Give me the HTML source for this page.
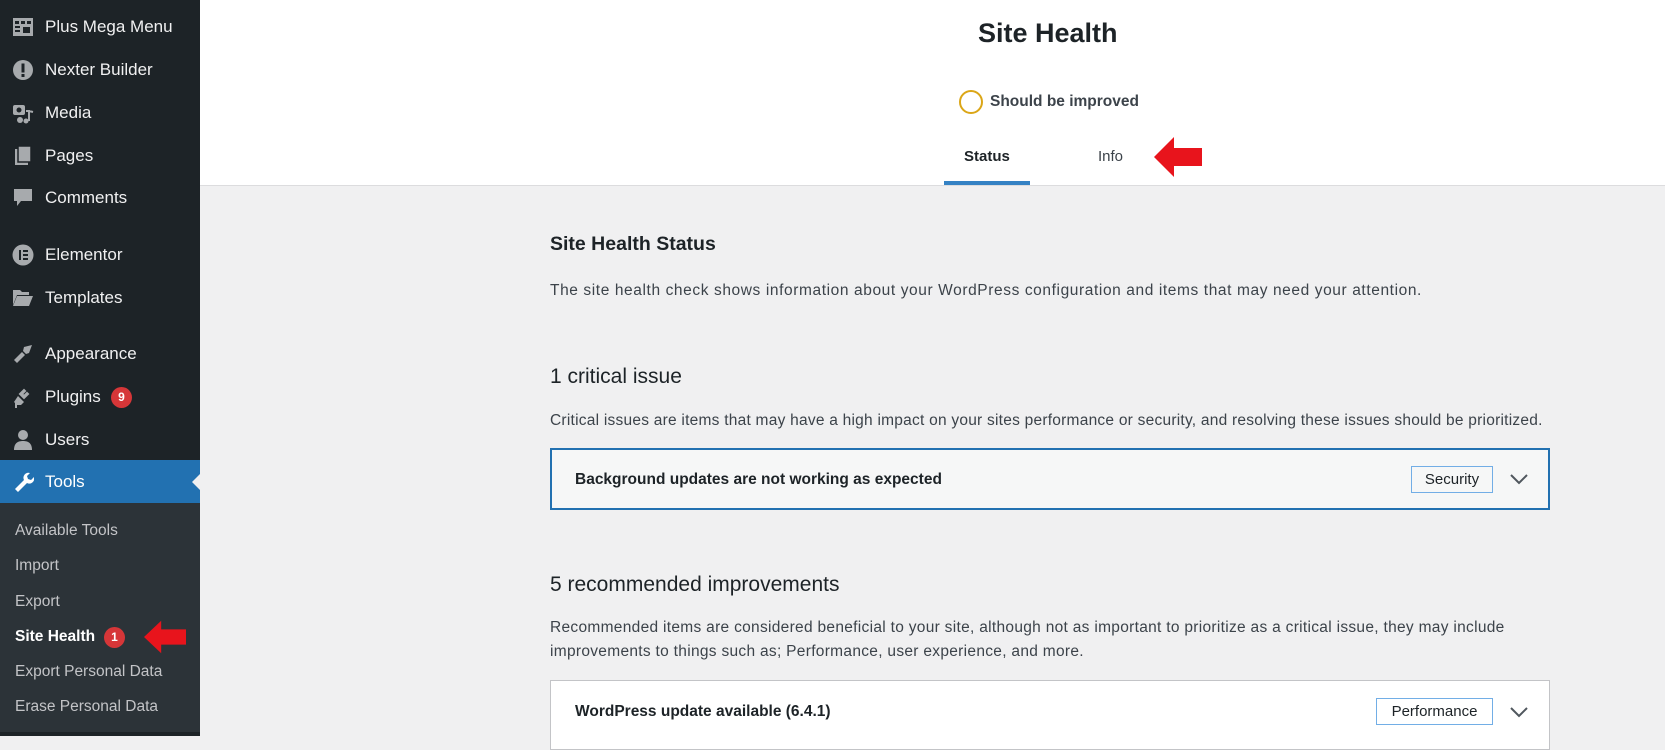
<!DOCTYPE html>
<html><head><meta charset="utf-8"><style>
*{margin:0;padding:0;box-sizing:border-box}
body{width:1665px;height:736px;overflow:hidden;background:#f0f0f1;font-family:"Liberation Sans",Arial,sans-serif;color:#1d2327;position:relative}
.a{position:absolute;white-space:nowrap}
#sb{position:absolute;left:0;top:0;width:200px;height:736px;background:#1d2327}
.mi{position:absolute;left:45px;color:#f0f0f1;font-size:17px;line-height:20px}
.ic{position:absolute;left:12px;width:22px;height:22px}
.sub{position:absolute;left:15px;color:#c3c4c7;font-size:15.5px;line-height:18px}
.badge{position:absolute;width:21px;height:21px;border-radius:50%;background:#d63638;color:#fff;font-size:12px;font-weight:bold;text-align:center;line-height:21px}
p.t{font-size:15.5px;color:#3c434a;letter-spacing:0.3px}
</style></head><body>
<div id="sb">
 <svg class="ic" style="top:16px" viewBox="0 0 22 22"><rect x="1" y="2" width="20" height="18" fill="#a7aaad"/><rect x="3" y="5" width="4" height="3" fill="#1d2327"/><rect x="9" y="5" width="4" height="3" fill="#1d2327"/><rect x="15" y="5" width="4" height="3" fill="#1d2327"/><rect x="3" y="10" width="5" height="2" fill="#1d2327"/><rect x="3" y="14" width="5" height="2" fill="#1d2327"/><rect x="11" y="11" width="7" height="6" fill="#1d2327"/></svg>
 <div class="mi" style="top:17px">Plus Mega Menu</div>
 <svg class="ic" style="top:59px" viewBox="0 0 22 22"><circle cx="11" cy="11" r="10" fill="#a7aaad"/><rect x="9.5" y="4.5" width="3" height="9" fill="#1d2327"/><rect x="9.5" y="15" width="3" height="3" fill="#1d2327"/></svg>
 <div class="mi" style="top:60px">Nexter Builder</div>
 <svg class="ic" style="top:102px" viewBox="0 0 22 22"><rect x="1" y="3" width="12" height="10" rx="2" fill="#a7aaad"/><circle cx="7" cy="8" r="2.5" fill="#1d2327"/><path d="M14 9h3v10M17 9l4 1" stroke="#a7aaad" stroke-width="2" fill="none"/><circle cx="14" cy="19" r="2.5" fill="#a7aaad"/><circle cx="8" cy="18" r="3" fill="#a7aaad"/></svg>
 <div class="mi" style="top:103px">Media</div>
 <svg class="ic" style="top:145px" viewBox="0 0 22 22"><rect x="3" y="4" width="13" height="16" fill="#a7aaad"/><rect x="6" y="1" width="13" height="16" fill="#a7aaad" stroke="#1d2327" stroke-width="1.5"/></svg>
 <div class="mi" style="top:146px">Pages</div>
 <svg class="ic" style="top:187px" viewBox="0 0 22 22"><path d="M2 2h18v12H9l-4 5v-5H2z" fill="#a7aaad"/></svg>
 <div class="mi" style="top:188px">Comments</div>
 <svg class="ic" style="top:244px" viewBox="0 0 22 22"><circle cx="11" cy="11" r="10.5" fill="#a7aaad"/><rect x="7" y="6" width="2" height="10" fill="#1d2327"/><rect x="11" y="6" width="5" height="2" fill="#1d2327"/><rect x="11" y="10" width="5" height="2" fill="#1d2327"/><rect x="11" y="14" width="5" height="2" fill="#1d2327"/></svg>
 <div class="mi" style="top:245px">Elementor</div>
 <svg class="ic" style="top:287px" viewBox="0 0 22 22"><path d="M1 3h7l2 2h7v3H5L1 18z" fill="#a7aaad"/><path d="M5 9h16l-4 10H1z" fill="#a7aaad"/></svg>
 <div class="mi" style="top:288px">Templates</div>
 <svg class="ic" style="top:343px" viewBox="0 0 22 22"><path d="M12 4l8-2-3 8-3 1-3-3z" fill="#a7aaad"/><path d="M10 9l3 3-8 8-3-3z" fill="#a7aaad"/></svg>
 <div class="mi" style="top:344px">Appearance</div>
 <svg class="ic" style="top:386px" viewBox="0 0 22 22"><path d="M6 10l6 6-3 3H5v4H3v-6l-1-1z" fill="#a7aaad"/><path d="M8 8l4-4 1 1-3 3 2 2 3-3 1 1-4 4z" fill="#a7aaad" stroke="#a7aaad" stroke-width="2"/></svg>
 <div class="mi" style="top:387px">Plugins</div>
 <div class="badge" style="left:111px;top:387px">9</div>
 <svg class="ic" style="top:429px" viewBox="0 0 22 22"><circle cx="11" cy="6" r="5" fill="#a7aaad"/><path d="M2 21c0-7 4-9 9-9s9 2 9 9z" fill="#a7aaad"/></svg>
 <div class="mi" style="top:430px">Users</div>
 <div style="position:absolute;left:0;top:460px;width:200px;height:43px;background:#2271b1"></div>
 <div style="position:absolute;left:192px;top:473px;width:0;height:0;border-top:9px solid transparent;border-bottom:9px solid transparent;border-right:9px solid #f0f0f1"></div>
 <svg class="ic" style="top:470px" viewBox="0 0 22 22"><path d="M3 19l9-9a5 5 0 0 1 6-7l-3 3 1 3 3 1 3-3a5 5 0 0 1-7 6l-9 9z" fill="#fff"/></svg>
 <div class="mi" style="top:472px;color:#fff">Tools</div>
 <div style="position:absolute;left:0;top:503px;width:200px;height:229px;background:#2c3338"></div>
 <div class="sub" style="top:522px">Available Tools</div>
 <div class="sub" style="top:557px">Import</div>
 <div class="sub" style="top:593px">Export</div>
 <div class="sub" style="top:628px;color:#fff;font-weight:bold">Site Health</div>
 <div class="badge" style="left:104px;top:627px">1</div>
 <div class="sub" style="top:663px">Export Personal Data</div>
 <div class="sub" style="top:698px">Erase Personal Data</div>
</div>
<svg class="a" style="left:144px;top:620px" width="42" height="34" viewBox="0 0 44 34"><path d="M0 17L18 0v9h26v16H18v9z" fill="#e8141c"/></svg>

<div style="position:absolute;left:200px;top:0;width:1465px;height:186px;background:#fff;border-bottom:1px solid #dcdcde"></div>
<div class="a" style="left:978px;top:18px;font-size:27px;font-weight:bold;color:#1d2327">Site Health</div>
<div class="a" style="left:959px;top:90px;width:24px;height:24px;border-radius:50%;border:2px solid #dba617"></div>
<div class="a" style="left:990px;top:93px;font-size:15.5px;font-weight:bold;color:#3c434a">Should be improved</div>
<div class="a" style="left:964px;top:148px;font-size:15px;font-weight:bold;color:#1d2327">Status</div>
<div class="a" style="left:1098px;top:148px;font-size:15px;color:#3c434a">Info</div>
<div class="a" style="left:944px;top:181px;width:86px;height:4px;background:#3582c4"></div>
<svg class="a" style="left:1154px;top:137px" width="48" height="40" viewBox="0 0 48 40"><path d="M0 20L20 0v11h28v18H20v11z" fill="#e8141c"/></svg>

<div class="a" style="left:550px;top:233px;font-size:19.5px;font-weight:bold;color:#1d2327">Site Health Status</div>
<p class="t a" style="left:550px;top:282px;letter-spacing:0.6px">The site health check shows information about your WordPress configuration and items that may need your attention.</p>
<div class="a" style="left:550px;top:365px;font-size:21px;color:#1d2327">1 critical issue</div>
<p class="t a" style="left:550px;top:412px;letter-spacing:0.24px">Critical issues are items that may have a high impact on your sites performance or security, and resolving these issues should be prioritized.</p>
<div class="a" style="left:550px;top:448px;width:1000px;height:62px;background:#f6f7f7;border:2px solid #2271b1"></div>
<div class="a" style="left:575px;top:471px;font-size:15.5px;font-weight:bold;color:#1d2327">Background updates are not working as expected</div>
<div class="a" style="left:1411px;top:466px;width:82px;height:27px;border:1px solid #72aee6;font-size:15px;color:#1d2327;text-align:center;line-height:25px">Security</div>
<svg class="a" style="left:1509px;top:473px" width="20" height="12" viewBox="0 0 20 12"><path d="M2 2l8 8 8-8" stroke="#50575e" stroke-width="2" fill="none"/></svg>

<div class="a" style="left:550px;top:573px;font-size:21px;color:#1d2327">5 recommended improvements</div>
<p class="t a" style="left:550px;top:619px">Recommended items are considered beneficial to your site, although not as important to prioritize as a critical issue, they may include</p>
<p class="t a" style="left:550px;top:643px">improvements to things such as; Performance, user experience, and more.</p>
<div class="a" style="left:550px;top:680px;width:1000px;height:70px;background:#fff;border:1px solid #c3c4c7"></div>
<div class="a" style="left:575px;top:703px;font-size:15.5px;font-weight:bold;color:#1d2327">WordPress update available (6.4.1)</div>
<div class="a" style="left:1376px;top:698px;width:117px;height:27px;border:1px solid #72aee6;font-size:15px;color:#1d2327;text-align:center;line-height:25px">Performance</div>
<svg class="a" style="left:1509px;top:706px" width="20" height="12" viewBox="0 0 20 12"><path d="M2 2l8 8 8-8" stroke="#50575e" stroke-width="2" fill="none"/></svg>
</body></html>
